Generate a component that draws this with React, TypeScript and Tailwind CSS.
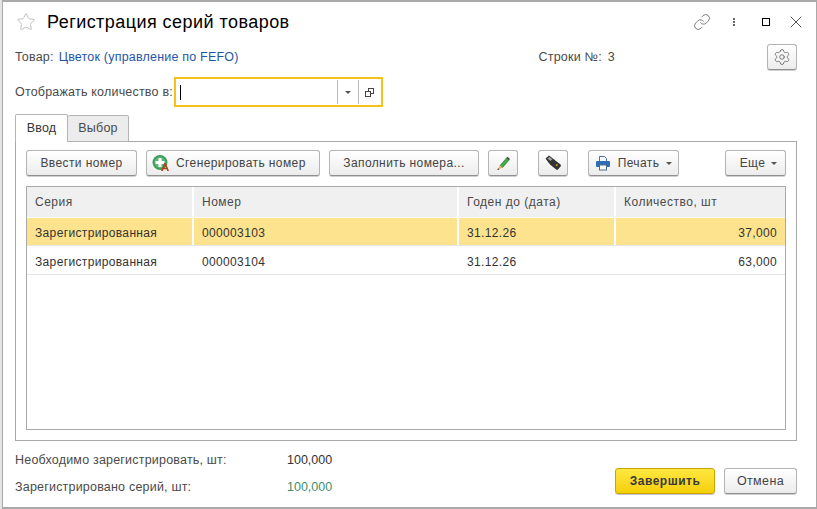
import { Link, Settings, Star, X } from 'lucide-react'
import type { ReactNode } from 'react'

const Caret = () => (
  <span className="inline-block h-0 w-0 border-x-[3px] border-t-[3px] border-x-transparent border-t-[#555]"></span>
)

const Btn = ({ className, children }: { className: string; children: ReactNode }) => (
  <button className={`flex h-[26px] items-center justify-center rounded-[3px] border border-[#b4b4b4] border-b-[#8f8f8f] bg-gradient-to-b from-white to-[#ececec] tracking-[0.4px] text-[#444] shadow-[0_1px_0_#d0d0d0] ${className}`}>
    {children}
  </button>
)

const GenerateIcon = () => (
  <svg width="18" height="18" viewBox="0 0 18 18">
    <circle cx="8" cy="8.500" r="7.500" fill="#3f9e5a" />
    <circle cx="8" cy="8.500" r="5.500" fill="#5cb874" />
    <path d="M6.500 4h3v3h3v3h-3v3h-3v-3h-3V7h3z" fill="#fff" />
    <path d="M9 17l3.200-8h1.600l3.200 8h-1.800l-.6-1.700h-3.200L10.800 17zM12 14h2l-1-2.800z" fill="#b5401c" />
  </svg>
)

const PencilIcon = () => (
  <svg width="16" height="16" viewBox="0 0 16 16">
    <path d="M5 10.500l6.500-7.500 2.500 2.200-6.500 7.500z" fill="#45a849" stroke="#2f7d35" strokeWidth="0.6" />
    <path d="M11.500 3l1-1.200 2.500 2.200-1 1.200z" fill="#3b3b3b" />
    <path d="M5 10.500l2.500 2.200L2 15z" fill="#eeb45d" />
    <path d="M3.200 13.300l1.300 1.100L2 15z" fill="#444" />
  </svg>
)

const ScannerIcon = () => (
  <svg width="16" height="16" viewBox="0 0 16 16">
    <path d="M0.500 3.500l3.500-3 11.500 9c.5.600.5 1.400 0 2l-2.500 3c-.6.500-1.200.500-1.800.1L5 9.500z" fill="#333" />
    <path d="M2.500 3.400l1.800-1.500 3 2.400-1.800 1.600z" fill="#a8a8a8" />
    <path d="M10.500 10.200l1.300-1.200 1.200 1-1.300 1.200z" fill="#e0aa20" />
  </svg>
)

const PrintIcon = () => (
  <svg width="16" height="16" viewBox="0 0 16 16">
    <path d="M4.500 1.500h5l2 2v3h-7z" fill="#f4f7fa" stroke="#4a6f96" />
    <rect x="1" y="6" width="14" height="6" rx="1" fill="#2f6fb5" />
    <rect x="4.500" y="10" width="7" height="5" fill="#fff" stroke="#4a6f96" />
  </svg>
)

const App = () => {
  return (
    <div className="flex h-[509px] w-[817px] overflow-hidden bg-white font-['Liberation_Sans',Arial,sans-serif] text-[12.5px] tracking-[0.2px] text-[#4a4a4a]">
      <div className="w-[2px] shrink-0 bg-[#e4e4e4]"></div>
      <div className="flex h-[509px] w-[815px] flex-col border-x border-y-2 border-x-[#a9a9a9] border-y-[#a9a9a9] bg-white">
        {/* header */}
        <div className="flex h-[42px] shrink-0 items-center pr-[10px] pb-[2px] pl-[13px]">
          <Star size={20} strokeWidth={1} className="text-[#b5b5b5]" />
          <span className="ml-[11px] flex-1 text-[18px] tracking-[0.45px] text-black">Регистрация серий товаров</span>
          <Link size={18} strokeWidth={1} className="text-[#555]" />
          <div className="ml-[22px] flex flex-col gap-[1px]">
            <span className="h-[2px] w-[2px] bg-[#666]"></span>
            <span className="h-[2px] w-[2px] bg-[#666]"></span>
            <span className="h-[2px] w-[2px] bg-[#666]"></span>
          </div>
          <span className="ml-[27px] h-[8px] w-[8px] border border-black"></span>
          <X size={20} strokeWidth={1} className="ml-[16px] text-[#333]" />
        </div>

        <div className="flex h-[26px] shrink-0 items-center pr-[19px] pl-[12px]">
          <span>Товар:</span>
          <span className="ml-[5px] text-[#1f55a8]">Цветок (управление по FEFO)</span>
          <span className="ml-[300px]">Строки №:</span>
          <span className="ml-[6px]">3</span>
          <Btn className="ml-auto w-[30px]">
            <Settings size={18} strokeWidth={1} className="text-[#555]" />
          </Btn>
        </div>

        <div className="mt-[7px] flex h-[30px] shrink-0 items-center pl-[12px]">
          <span>Отображать количество в:</span>
          <div className="ml-[1px] flex h-[30px] w-[209px] items-center border-2 border-[#f5c21b] pl-[4px]">
            <span className="h-[15px] w-px bg-black"></span>
            <span className="ml-[156px] flex h-[24px] w-[22px] items-center justify-center border-x border-[#b9b9b9]">
              <Caret />
            </span>
            <span className="flex flex-1 items-center justify-center">
              <span className="relative h-[9px] w-[9px]">
                <span className="absolute top-0 right-0 h-[6px] w-[6px] border border-[#444]"></span>
                <span className="absolute bottom-0 left-0 h-[6px] w-[6px] border border-[#444] bg-white"></span>
              </span>
            </span>
          </div>
        </div>

        {/* tabs */}
        <div className="relative z-10 mt-[7px] ml-[12px] flex h-[28px] shrink-0 items-end">
          <div className="flex h-[28px] w-[53px] items-center justify-center rounded-t-[2px] border border-b-0 border-[#b4b4b4] bg-white text-[#333]">Ввод</div>
          <div className="flex h-[27px] w-[61px] items-center justify-center rounded-t-[2px] border border-l-0 border-[#b4b4b4] bg-[#ececec]">Выбор</div>
        </div>

        <div className="mr-[19px] ml-[12px] -mt-px flex h-[300px] shrink-0 flex-col border border-[#a9a9a9] px-[10px] pt-[8px] pb-[10px] text-[12px]">
          <div className="flex shrink-0">
            <Btn className="w-[111px]">Ввести номер</Btn>
            <Btn className="ml-[9px] w-[174px] justify-start gap-[6px] pl-[5px]">
              <GenerateIcon />
              Сгенерировать номер
            </Btn>
            <Btn className="ml-[9px] w-[150px]">Заполнить номера...</Btn>
            <Btn className="ml-[9px] w-[30px]"><PencilIcon /></Btn>
            <Btn className="ml-[20px] w-[30px]"><ScannerIcon /></Btn>
            <Btn className="ml-[20px] w-[91px] gap-[7px]">
              <PrintIcon />
              Печать
              <Caret />
            </Btn>
            <Btn className="ml-[46px] w-[61px] gap-[6px] pl-[6px]">
              Еще
              <Caret />
            </Btn>
          </div>

          <div className="mt-[10px] min-h-0 flex-1 border border-[#a9a9a9] tracking-[0.35px]">
            <div className="flex h-[30px] bg-[#f0f0f0] tracking-[0.5px]">
              <div className="flex w-[167px] items-center border-r-2 border-white pl-[8px]">Серия</div>
              <div className="flex w-[265px] items-center border-r-2 border-white pl-[8px]">Номер</div>
              <div className="flex w-[157px] items-center border-r-2 border-white pl-[8px]">Годен до (дата)</div>
              <div className="flex flex-1 items-center pl-[8px]">Количество, шт</div>
            </div>
            <div className="flex h-[29px] border-y border-[#e6e6e6] border-t-white bg-[#fde38d] text-[#333]">
              <div className="flex w-[167px] items-center border-r-2 border-white pt-[3px] pl-[8px]">Зарегистрированная</div>
              <div className="flex w-[265px] items-center border-r-2 border-white pt-[3px] pl-[8px]">000003103</div>
              <div className="flex w-[157px] items-center border-r-2 border-white pt-[3px] pl-[8px]">31.12.26</div>
              <div className="flex flex-1 items-center justify-end pt-[3px] pr-[8px]">37,000</div>
            </div>
            <div className="flex h-[29px] border-b border-[#e6e6e6] pt-[4px] text-[#333]">
              <div className="flex w-[167px] items-center pl-[8px]">Зарегистрированная</div>
              <div className="flex w-[265px] items-center pl-[8px]">000003104</div>
              <div className="flex w-[157px] items-center pl-[8px]">31.12.26</div>
              <div className="flex flex-1 items-center justify-end pr-[8px]">63,000</div>
            </div>
          </div>
        </div>

        {/* footer */}
        <div className="mt-[6px] flex pr-[19px] pl-[12px]">
          <div className="flex w-[600px] flex-col">
            <div className="flex h-[27px] items-center">
              <span className="w-[272px]">Необходимо зарегистрировать, шт:</span>
              <span className="tracking-normal text-[#333]">100,000</span>
            </div>
            <div className="flex h-[27px] items-center">
              <span className="w-[272px]">Зарегистрировано серий, шт:</span>
              <span className="tracking-normal text-[#3f8f6b]">100,000</span>
            </div>
          </div>
          <div className="mt-[21px] flex">
            <button className="flex h-[26px] w-[100px] items-center justify-center rounded-[3px] border border-[#c9a400] bg-gradient-to-b from-[#ffe83d] to-[#f5cf00] text-[12px] font-bold tracking-[0.5px] text-[#3a3a3a] shadow-[0_1px_0_#c8c8c8]">
              Завершить
            </button>
            <Btn className="ml-[9px] w-[73px]">Отмена</Btn>
          </div>
        </div>
      </div>
    </div>
  )
}

export default App
